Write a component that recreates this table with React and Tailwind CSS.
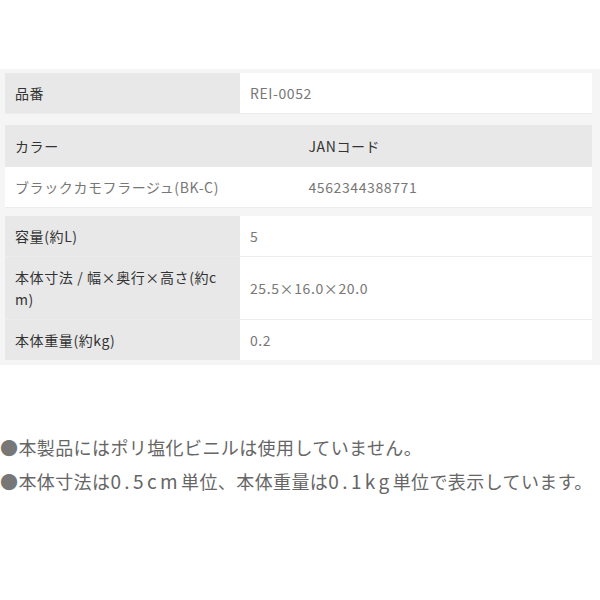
const specs = [
  { label: "容量(約L)", value: "5" },
  { label: "本体寸法 / 幅×奥行×高さ(約cm)", value: "25.5×16.0×20.0" },
  { label: "本体重量(約kg)", value: "0.2" },
];

const jp = { fontFamily: '"Noto Sans CJK JP", "Noto Sans", sans-serif' };

function LabelRow({ label, value, last }) {
  return (
    <div className={`flex ${last ? "" : "border-b border-[#ececec]"}`}>
      <div className="w-[235px] shrink-0 bg-[#e8e8e8] px-[10px] py-[9px] text-[14px] leading-[22px] tracking-[0.6px] text-[#333] break-all">
        {label}
      </div>
      <div className="flex flex-1 items-center bg-white px-[10px] py-[9px] text-[14px] leading-[22px] tracking-[0.6px] text-[#777]">
        {value}
      </div>
    </div>
  );
}

export default function App() {
  return (
    <div className="h-[600px] w-[600px] overflow-hidden bg-white pt-[69px]" style={jp}>
      <div className="flex flex-col gap-[11px] bg-[#f5f5f5] pb-[5px] pl-[5px] pr-[8px] pt-[4px]">
        {/* 品番 */}
        <div className="border-b border-[#ececec]">
          <LabelRow label="品番" value="REI-0052" last />
        </div>

        {/* カラー / JAN */}
        <div className="-mb-[3px] border-b border-[#ececec]">
          <div className="grid grid-cols-2 bg-[#e8e8e8] text-[14px] leading-[22px] tracking-[0.6px] text-[#333]">
            <div className="px-[10px] py-[10px]">カラー</div>
            <div className="px-[10px] py-[10px]">JANコード</div>
          </div>
          <div className="grid grid-cols-2 bg-white text-[14px] leading-[22px] tracking-[0.6px] text-[#777]">
            <div className="px-[10px] py-[9px]">ブラックカモフラージュ(BK-C)</div>
            <div className="px-[10px] py-[9px]">4562344388771</div>
          </div>
        </div>

        {/* spec table */}
        <div>
          {specs.map((s, i) => (
            <LabelRow key={s.label} label={s.label} value={s.value} last={i === specs.length - 1} />
          ))}
        </div>
      </div>

      <div className="mt-[66px] text-[18px] leading-[33px] tracking-[0.4px] text-[#666]">
        <p><span className="text-[#777]">●</span>本製品にはポリ塩化ビニルは使用していません。</p>
        <p>
          <span className="text-[#777]">●</span>本体寸法は
          <span className="text-[19px] tracking-[3.4px]">0.5cm</span>単位、本体重量は
          <span className="text-[19px] tracking-[3.4px]">0.1kg</span>単位で表示しています。
        </p>
      </div>
    </div>
  );
}
